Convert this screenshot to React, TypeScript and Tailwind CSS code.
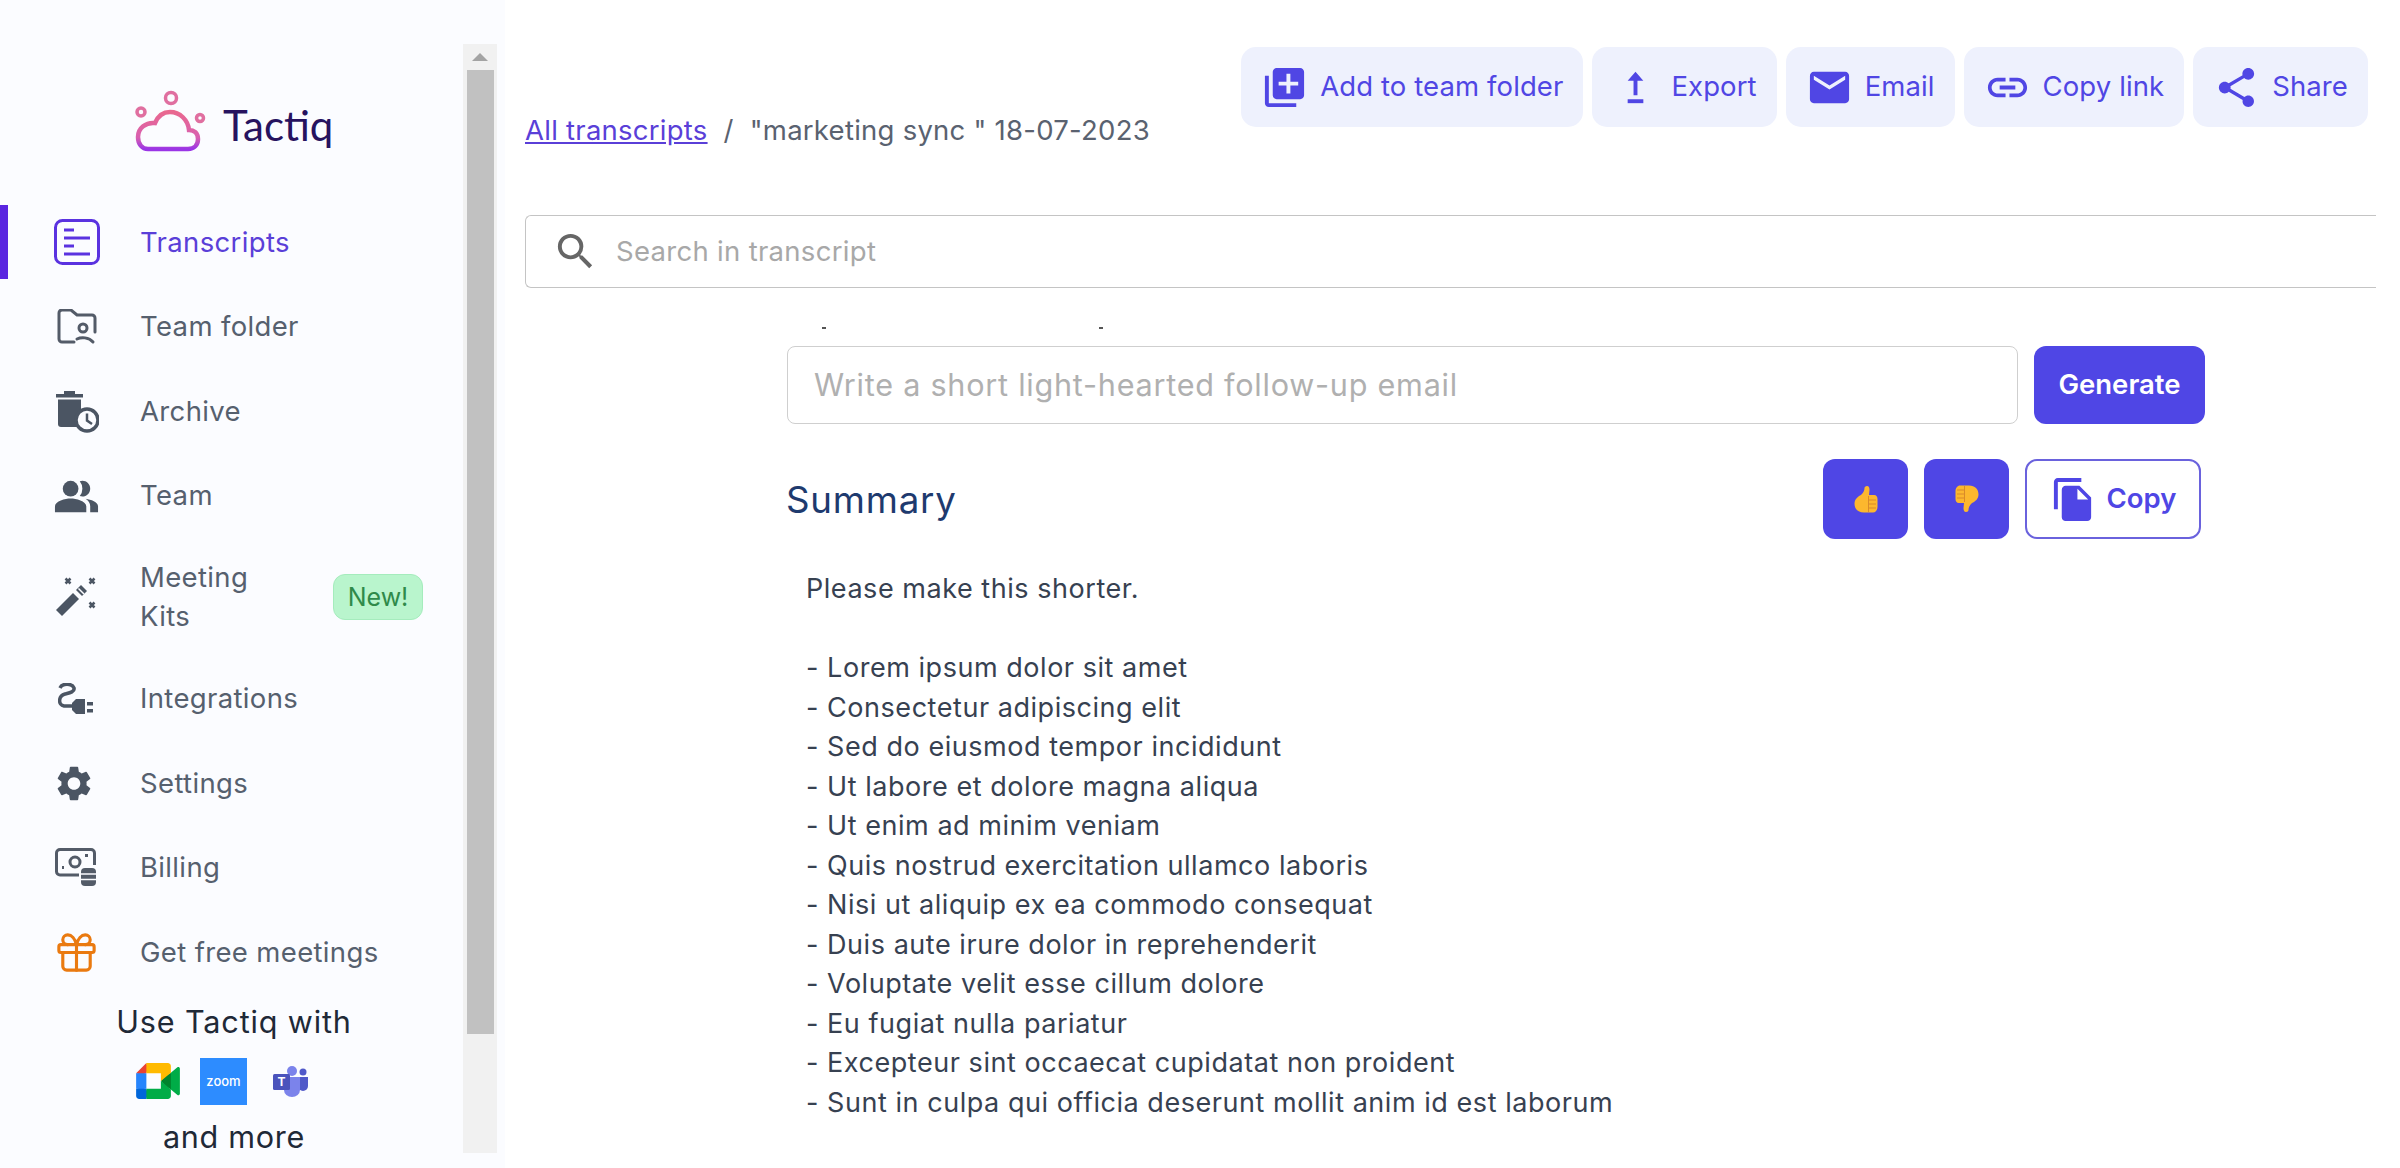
import { Gift } from "lucide-react";
import {
  MdEmail,
  MdFileCopy,
  MdLibraryAdd,
  MdLink,
  MdPeopleAlt,
  MdSearch,
  MdSettings,
  MdShare,
} from "react-icons/md";

const summaryLines = [
  "- Lorem ipsum dolor sit amet",
  "- Consectetur adipiscing elit",
  "- Sed do eiusmod tempor incididunt",
  "- Ut labore et dolore magna aliqua",
  "- Ut enim ad minim veniam",
  "- Quis nostrud exercitation ullamco laboris",
  "- Nisi ut aliquip ex ea commodo consequat",
  "- Duis aute irure dolor in reprehenderit",
  "- Voluptate velit esse cillum dolore",
  "- Eu fugiat nulla pariatur",
  "- Excepteur sint occaecat cupidatat non proident",
  "- Sunt in culpa qui officia deserunt mollit anim id est laborum",
];

const TactiqLogo = () => (
  <svg width="74" height="63" viewBox="0 0 74 63" fill="none">
    <defs>
      <linearGradient id="logoGrad" x1="0" y1="0" x2="0" y2="1">
        <stop offset="0" stopColor="#e9688f" />
        <stop offset="0.7" stopColor="#d85fb0" />
        <stop offset="1" stopColor="#9a35e6" />
      </linearGradient>
    </defs>
    <path
      d="M14 59H54C60 59 64 55 64 49C64 43 60 40 55 40C54 30 46 22 36 22C29 22 24 26 21 33C12 32 4 38 4 47C4 54 8 59 14 59Z"
      stroke="url(#logoGrad)"
      strokeWidth="4.5"
    />
    <circle cx="37" cy="8" r="5.500" stroke="#e06fa0" strokeWidth="3.500" />
    <circle cx="7" cy="22" r="4" stroke="#e06fa0" strokeWidth="3.500" />
    <circle cx="66" cy="28" r="3.500" stroke="#e06fa0" strokeWidth="3.500" />
  </svg>
);

const TranscriptsIcon = () => (
  <svg width="46" height="46" viewBox="0 0 46 46" fill="none" stroke="#5a32e0" strokeWidth="3">
    <rect x="1.500" y="1.500" width="43" height="43" rx="7" />
    <path d="M10 11H20M10 19H36M10 27H20M10 35H36" />
  </svg>
);

const FolderIcon = () => (
  <svg width="40" height="36" viewBox="0 0 40 36" fill="none" stroke="#535b68" strokeWidth="3" strokeLinecap="round">
    <path d="M17 33H5a3 3 0 0 1-3-3V4a3 3 0 0 1 3-3H14l6 5H35a3 3 0 0 1 3 3V23" />
    <circle cx="26" cy="19" r="4" />
    <path d="M20 30C24 28 32 28 36 33" />
  </svg>
);

const ArchiveIcon = () => (
  <svg width="44" height="44" viewBox="0 0 44 44" fill="#4b5563">
    <rect x="9" y="2" width="11" height="3" />
    <rect x="1" y="5" width="27" height="3.500" />
    <path d="M3 10.500H26V38H6a3 3 0 0 1-3-3Z" />
    <circle cx="32" cy="31" r="11" fill="#fbfcff" stroke="#4b5563" strokeWidth="3.500" />
    <path d="M32 24.500V31.500L37 35" fill="none" stroke="#4b5563" strokeWidth="2.500" />
  </svg>
);

const WandIcon = () => (
  <svg width="43" height="42" viewBox="0 0 43 42" fill="none" stroke="#4b5563">
    <path d="M4 37L21 20" strokeWidth="8.500" />
    <path d="M24 17L29 12" strokeWidth="8.500" />
    <path d="M23.500 12.500L29 18" stroke="#fbfcff" strokeWidth="1.500" />
    <path d="M10.500 2.500L15.500 7.500M15.500 2.500L10.500 7.500M34.500 2.500L39.500 7.500M39.500 2.500L34.500 7.500M34.500 26.500L39.500 31.500M39.500 26.500L34.500 31.500" strokeWidth="2.500" />
  </svg>
);

const PlugIcon = () => (
  <svg width="37" height="32" viewBox="0 0 37 32" fill="#4b5563">
    <path d="M2 5C4 0 14 0 16 5C17 9 11 10 7 11C0 13 0 22 6 23H15" fill="none" stroke="#4b5563" strokeWidth="3.500" />
    <path d="M14 20L18 16H27V31H18L14 27Z" />
    <rect x="29" y="19" width="6" height="3.500" />
    <rect x="29" y="26" width="6" height="3.500" />
  </svg>
);

const BillingIcon = () => (
  <svg width="43" height="39" viewBox="0 0 43 39" fill="none" stroke="#535b68" strokeWidth="3">
    <path d="M24 27H5a3.500 3.500 0 0 1-3.500-3.500V5A3.500 3.500 0 0 1 5 1.500H36A3.500 3.500 0 0 1 39.500 5V17" />
    <circle cx="20" cy="14" r="5" />
    <path d="M7 19.500H9M30 7.500H33" />
    <rect x="26" y="20" width="15" height="18" rx="4" fill="#535b68" stroke="none" />
    <path d="M26 26H41M26 31.500H41" stroke="#fbfcff" strokeWidth="1.500" />
  </svg>
);

const MeetLogo = () => (
  <svg width="44" height="36" viewBox="0 0 87.5 72">
    <path fill="#00832d" d="M49.5 36l8.53 9.75 11.47 7.33 2-17.020-2-16.640-11.690 6.440z" />
    <path fill="#0066da" d="M0 51.500V66c0 3.315 2.685 6 6 6h14.500l3-10.960-3-9.540-9.950-3z" />
    <path fill="#e94235" d="M20.500 0L0 20.500l10.550 3 9.950-3 2.950-9.410z" />
    <path fill="#2684fc" d="M20.500 20.500H0v31h20.500z" />
    <path fill="#00ac47" d="M82.600 8.680L69.500 19.420v33.660l13.160 10.790c1.970 1.540 4.850.135 4.850-2.370V11c0-2.535-2.945-3.925-4.910-2.320zM49.5 36v15.500h-29V72h43c3.315 0 6-2.685 6-6V53.080z" />
    <path fill="#ffba00" d="M63.500 0h-43v20.500h29V36l20-16.570V6c0-3.315-2.685-6-6-6z" />
  </svg>
);

const TeamsLogo = () => (
  <svg width="36" height="31" viewBox="0 0 36 31">
    <circle cx="30" cy="6" r="3.500" fill="#5059c9" />
    <path d="M25 11H35V20a5 5 0 0 1-10 0Z" fill="#5059c9" />
    <circle cx="19" cy="5" r="5" fill="#7b83eb" />
    <path d="M11 11H27V24a8 7 0 0 1-16 0Z" fill="#7b83eb" />
    <rect x="0" y="8" width="17" height="16" rx="1.500" fill="#4b53bc" />
    <text x="8.500" y="20" fontSize="12" fontWeight="700" textAnchor="middle" fill="#fff">T</text>
  </svg>
);

const ThumbIcon = ({ down = false }: { down?: boolean }) => (
  <svg width="24" height="28" viewBox="0 0 24 28" className={down ? "rotate-180" : ""}>
    <path
      d="M13 1C15 1 15.500 3 15.500 5L15 10H20C22.500 10 23.500 12 23.500 14V22C23.500 25 21.500 27.500 19 27.500H10C4 27.500 0.500 24 0.500 18.500C0.500 14 4 11.500 7 10C9.500 8 10.500 5 10.500 3C10.500 2 11.500 1 13 1Z"
      fill="#fcb72e"
    />
    <path d="M14.500 11V27M14.500 15H22M14.500 19H22M14.500 23H22" fill="none" stroke="#d98a2a" strokeWidth="1" />
  </svg>
);

const ExportIcon = () => (
  <svg width="47" height="47" viewBox="0 0 24 24" fill="#5046e4">
    <path d="M12 4L8 8.500H11V16H13V8.500H16Z" />
    <rect x="8" y="18" width="8" height="2" />
  </svg>
);

const NavRow = ({
  icon,
  label,
  active = false,
}: {
  icon: React.ReactNode;
  label: string;
  active?: boolean;
}) => (
  <div className="flex h-[84.6px] items-center">
    <div className={active ? "h-[74px] w-2 bg-[#5a25e0]" : "h-[74px] w-2"} />
    <div className="ml-[45px] flex w-[47px] justify-center">{icon}</div>
    <span className={active ? "ml-[40px] tracking-[0.35px] text-[#5a3fd8]" : "ml-[40px] tracking-[0.35px] text-[#56606e]"}>
      {label}
    </span>
  </div>
);

const ActionButton = ({ icon, label }: { icon: React.ReactNode; label: string }) => (
  <button className="flex h-20 items-center gap-3 rounded-[15px] bg-[#eef1fd] pl-5 pr-5 tracking-[0.1px] text-[#5046e4]">
    {icon}
    {label}
  </button>
);

const App = () => {
  return (
    <div className="flex h-[1168px] w-[2400px] overflow-hidden bg-white font-[Inter,sans-serif] text-[27.5px]">
      {/* Sidebar */}
      <aside className="flex h-full w-[505px] shrink-0 bg-[#fbfcff]">
        <div className="w-[463px] shrink-0">
          <div className="flex h-[200px] items-start gap-[15px] pl-[134px] pt-[90px]">
            <TactiqLogo />
            <span className="mt-[7px] font-[Lato,sans-serif] text-[42px] leading-[56px] text-[#27135f]">Tactiq</span>
          </div>
          <NavRow active icon={<TranscriptsIcon />} label="Transcripts" />
          <NavRow icon={<FolderIcon />} label="Team folder" />
          <NavRow icon={<ArchiveIcon />} label="Archive" />
          <NavRow icon={<MdPeopleAlt size={47} color="#4b5563" />} label="Team" />
          <div className="flex h-[118px] items-center">
            <div className="h-[74px] w-2" />
            <div className="ml-[45px] flex w-[47px] justify-center">
              <WandIcon />
            </div>
            <span className="ml-[40px] w-[150px] leading-[39px] tracking-[0.35px] text-[#56606e]">Meeting Kits</span>
            <span className="ml-[43px] flex h-[46px] w-[90px] items-center justify-center rounded-xl border border-[#a5ecbd] bg-[#b9f5cd] text-[25px] text-[#2f8a4a]">
              New!
            </span>
          </div>
          <NavRow icon={<PlugIcon />} label="Integrations" />
          <NavRow icon={<MdSettings size={43} color="#4b5563" className="mr-[5px]" />} label="Settings" />
          <NavRow icon={<BillingIcon />} label="Billing" />
          <NavRow icon={<Gift size={47} color="#ea7a10" strokeWidth={1.6} />} label="Get free meetings" />
          <div className="mt-[4px] pl-[5px] text-center text-[30.6px] leading-[46px] tracking-[0.85px] text-[#1f2937]">
            Use Tactiq with
          </div>
          <div className="mt-[13px] flex h-[47px] items-center pl-[136px]">
            <MeetLogo />
            <div className="ml-[20px] flex h-[47px] w-[47px] items-center justify-center bg-[#2d8cff] text-[13px] font-medium text-white">
              zoom
            </div>
            <div className="ml-[26px]">
              <TeamsLogo />
            </div>
          </div>
          <div className="mt-[9px] pl-[5px] text-center text-[30.6px] leading-[46px] tracking-[0.7px] text-[#1f2937]">
            and more
          </div>
        </div>
        {/* Scrollbar */}
        <div className="mt-[44px] flex h-[1109px] w-[34px] flex-col items-center bg-[#f1f1f1]">
          <div className="flex h-[26px] items-center">
            <div className="h-0 w-0 border-x-[8px] border-b-[8px] border-x-transparent border-b-[#a3a3a3]" />
          </div>
          <div className="h-[964px] w-[27px] bg-[#c1c1c1]" />
        </div>
      </aside>

      {/* Main */}
      <main className="min-w-0 flex-1 pl-5 pr-6">
        <div className="flex h-[152px] items-end justify-between pr-2">
          <div className="mb-[2px] flex h-10 items-center leading-10 tracking-[0.25px] text-[#5a6270]">
            <a className="text-[#5a3fd8] underline">All transcripts</a>
            <span className="mx-[16px]">/</span>
            <span>"marketing sync " 18-07-2023</span>
          </div>
          <div className="flex gap-[9px] self-start pt-[47px]">
            <ActionButton icon={<MdLibraryAdd size={47} />} label="Add to team folder" />
            <ActionButton icon={<ExportIcon />} label="Export" />
            <ActionButton icon={<MdEmail size={47} />} label="Email" />
            <ActionButton icon={<MdLink size={47} />} label="Copy link" />
            <ActionButton icon={<MdShare size={47} />} label="Share" />
          </div>
        </div>

        <div className="mt-[63px] flex h-[73px] items-center rounded-l-md border border-r-0 border-[#c4c4c4] pl-[26px]">
          <MdSearch size={47} color="#666666" />
          <span className="ml-[17px] tracking-[0.3px] text-[#a8a8a8]">Search in transcript</span>
        </div>

        {/* Content */}
        <div className="w-[1700px] pl-[262px]">
          <div className="mt-[39px] flex h-[2px]">
            <div className="ml-[35px] h-[2px] w-[4px] bg-[#555555]" />
            <div className="ml-[273px] h-[2px] w-[4px] bg-[#555555]" />
          </div>
          <div className="mt-[17px] flex h-[78px] w-[1418px] gap-4">
            <div className="flex w-[1231px] items-center rounded-lg border border-[#cfcfcf] pl-[26px] text-[30.6px] tracking-[0.75px] text-[#b0b0b0]">
              Write a short light-hearted follow-up email
            </div>
            <button className="w-[171px] rounded-xl bg-[#4f46e5] font-semibold text-white">Generate</button>
          </div>

          <div className="mt-[35px] flex h-[80px] w-[1414px] items-center justify-between">
            <h2 className="-ml-[1px] mt-[2px] text-[36.7px] tracking-[0.8px] text-[#1e3a6e]">Summary</h2>
            <div className="flex gap-4">
              <button className="flex h-[80px] w-[85px] items-center justify-center rounded-xl bg-[#4f46e5]">
                <ThumbIcon />
              </button>
              <button className="flex h-[80px] w-[85px] items-center justify-center rounded-xl bg-[#4f46e5]">
                <ThumbIcon down />
              </button>
              <button className="flex h-[80px] w-[176px] items-center justify-center gap-[10px] rounded-xl border-2 border-[#6a62dd] font-semibold text-[#4f46e5]">
                <MdFileCopy size={47} />
                Copy
              </button>
            </div>
          </div>

          <div className="mt-[30px] pl-[19px] text-[27px] leading-[39.500px] tracking-[0.54px] text-[#374151]">
            <p>Please make this shorter.</p>
            <p>&nbsp;</p>
            {summaryLines.map((line) => (
              <p key={line}>{line}</p>
            ))}
          </div>
        </div>
      </main>
    </div>
  );
};

export default App;
